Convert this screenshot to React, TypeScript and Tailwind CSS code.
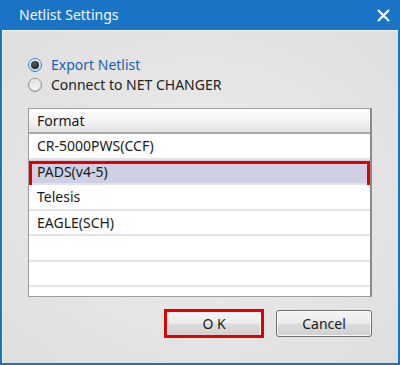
import React from "react";

const font = { fontFamily: '"Noto Sans", "Open Sans", "Liberation Sans", sans-serif' };

function Radio({ checked, label }: { checked: boolean; label: string }) {
  return (
    <div className="flex items-center h-[20px]">
      <div
        className={
          "w-[14px] h-[14px] rounded-full border flex items-center justify-center " +
          (checked
            ? "border-[#3c86c8] bg-[linear-gradient(#dff0fb,#b9dbf3)]"
            : "border-[#8c8c8c] bg-[linear-gradient(#f4f4f4,#cfcfcf)]")
        }
      >
        {checked ? (
          <div className="w-[8px] h-[8px] rounded-full bg-[radial-gradient(circle_at_40%_35%,#5a5a5a,#141414)]" />
        ) : (
          <div className="w-[10px] h-[10px] rounded-full bg-[linear-gradient(#e2e2e2,#f6f6f6)]" />
        )}
      </div>
      <span
        className={
          "ml-[9px] text-[14px] leading-none " + (checked ? "text-[#1d5fb8]" : "text-[#222222]")
        }
      >
        {label}
      </span>
    </div>
  );
}

function Row({ text, selected }: { text?: string; selected?: boolean }) {
  return (
    <div
      className={
        "relative h-[25.5px] shrink-0 flex items-center pl-[8px] border-b-2 border-[#e3e3e3] text-[14px] text-[#1a1a1a] " +
        (selected ? "bg-[#d0d0e4]" : "bg-white")
      }
    >
      {text}
      {selected && (
        <div className="absolute left-0 right-0 top-[1px] h-[30px] border-[3px] border-[#e00000]" />
      )}
    </div>
  );
}

function Button({ label, highlight }: { label: string; highlight?: boolean }) {
  return (
    <div className="relative">
      <div className="w-[96px] h-[27px] rounded-[3px] border border-[#707070] bg-[linear-gradient(#f4f4f4_0%,#ececec_48%,#dcdcdc_52%,#d0d0d0_100%)] shadow-[inset_0_0_0_1px_#fbfbfb] flex items-center justify-center text-[14px] text-[#1a1a1a]">
        {label}
      </div>
      {highlight && (
        <div className="absolute left-[-2px] right-[-2px] top-[-1px] bottom-[-1px] border-[3px] border-[#e00000]" />
      )}
    </div>
  );
}

export default function App() {
  return (
    <div className="w-[400px] h-[365px] bg-[#1a74c6] flex flex-col" style={font}>
      <div className="h-[30px] shrink-0 flex items-center justify-between pl-[19px] pr-[10px]">
        <span className="text-[14px] text-[#f2f7fc] leading-none">Netlist Settings</span>
        <svg width="13" height="13" viewBox="0 0 13 13">
          <path d="M1 1 L12 12 M12 1 L1 12" stroke="#ffffff" strokeWidth="2.2" />
        </svg>
      </div>
      <div className="flex-1 mx-[2px] mb-[2px] border-l border-t border-[#f3f3f3] bg-[radial-gradient(ellipse_at_center,#ececec_0%,#e4e4e4_60%,#dedede_100%)] flex flex-col pt-[24px] pl-[25px] pr-[26px]">
        <Radio checked label="Export Netlist" />
        <Radio checked={false} label="Connect to NET CHANGER" />
        <div className="mt-[13px] h-[189px] border border-[#9c9c9c] border-r-2 border-r-[#8a8a8a] bg-white flex flex-col overflow-hidden">
          <div className="h-[25px] shrink-0 flex items-center pl-[8px] border-b-2 border-[#a8a8a8] bg-[linear-gradient(#ffffff_0%,#f4f4f4_50%,#e2e2e2_100%)] text-[14px] text-[#1a1a1a]">
            Format
          </div>
          <Row text="CR-5000PWS(CCF)" />
          <Row text="PADS(v4-5)" selected />
          <Row text="Telesis" />
          <Row text="EAGLE(SCH)" />
          <Row />
          <Row />
          <Row />
        </div>
        <div className="mt-[13px] flex justify-end gap-[14px]">
          <Button label="O K" highlight />
          <Button label="Cancel" />
        </div>
      </div>
    </div>
  );
}
